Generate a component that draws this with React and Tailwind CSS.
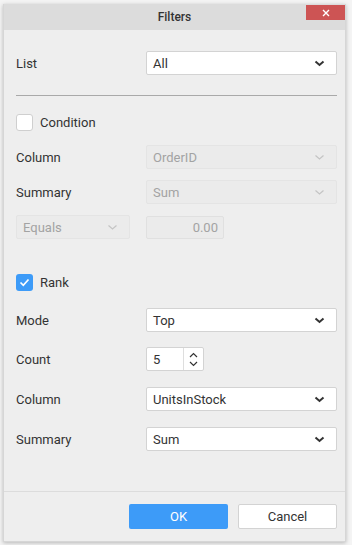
const font = { fontFamily: 'Roboto, "Liberation Sans", sans-serif' }

function Chevron({ disabled }) {
    return (
        <svg width="11" height="7" viewBox="0 0 11 7" className="shrink-0">
            <polyline
                points="1.5,1.5 5.5,5 9.5,1.5"
                fill="none"
                stroke={disabled ? '#c4c4c4' : '#333'}
                strokeWidth={disabled ? 1.2 : 2}
            />
        </svg>
    )
}

function Select({ value, disabled, className = '' }) {
    return (
        <div
            className={`h-[24px] flex items-center justify-between pl-[6px] pr-[11px] rounded-[2px] border text-[13px] leading-none ${
                disabled ? 'bg-[#ebebeb] border-[#e4e4e4] text-[#a3a3a3]' : 'bg-white border-[#d3d3d3] text-[#333]'
            } ${className}`}
        >
            <span>{value}</span>
            <Chevron disabled={disabled} />
        </div>
    )
}

function Row({ label, children, className = '' }) {
    return (
        <div className={`flex items-center ${className}`}>
            <div className="w-[130px] text-[13px] leading-none text-[#333]">{label}</div>
            <div className="flex-1">{children}</div>
        </div>
    )
}

function Checkbox({ checked, label, className = '' }) {
    return (
        <div className={`h-[17px] flex items-center gap-[7px] ${className}`}>
            {checked ? (
                <div className="w-[17px] h-[17px] rounded-[3px] bg-[#3d9bf8] flex items-center justify-center">
                    <svg width="11" height="9" viewBox="0 0 11 9">
                        <polyline points="1.5,4.5 4.3,7.3 9.5,1.5" fill="none" stroke="white" strokeWidth="1.7" />
                    </svg>
                </div>
            ) : (
                <div className="w-[17px] h-[17px] rounded-[3px] bg-white border border-[#cfcfcf]" />
            )}
            <span className="text-[13px] leading-none text-[#333]">{label}</span>
        </div>
    )
}

export default function App() {
    return (
        <div className="w-[352px] h-[545px] bg-[#f4f4f4] overflow-hidden" style={font}>
            <div className="relative ml-[3px] mt-[4px] w-[343px] h-[538px] flex flex-col bg-[#eeeeee] border-x border-b border-[#d6d6d6] shadow-[0_1px_4px_rgba(0,0,0,0.25)]">
                {/* Header */}
                <div className="h-[26px] bg-[#dcdcdc] flex items-center justify-center text-[12px] font-medium text-[#333]">
                    Filters
                </div>
                <div className="absolute right-[0px] top-[1px] w-[39px] h-[15px] bg-[#cd5454] flex items-center justify-center">
                    <svg width="8" height="8" viewBox="0 0 8 8">
                        <path d="M1 1 L7 7 M7 1 L1 7" stroke="white" strokeWidth="1.4" />
                    </svg>
                </div>

                {/* Body */}
                <div className="flex-1 flex flex-col pl-[12px] pr-[8px]">
                    <Row label="List" className="mt-[21px]">
                        <Select value="All" />
                    </Row>
                    <div className="mt-[20px] border-t border-[#a9a9a9]" />

                    <Checkbox label="Condition" className="mt-[18px]" />
                    <Row label="Column" className="mt-[14px]">
                        <Select value="OrderID" disabled className="h-[23px]" />
                    </Row>
                    <Row label="Summary" className="mt-[11px]">
                        <Select value="Sum" disabled className="h-[23px]" />
                    </Row>
                    <div className="mt-[11px] flex items-center">
                        <div className="w-[114px] mr-[16px]">
                            <Select value="Equals" disabled className="h-[23px]" />
                        </div>
                        <div className="w-[78px] h-[23px] rounded-[2px] border border-[#e0e0e0] bg-[#ebebeb] text-[13px] leading-none text-[#a3a3a3] flex items-center justify-end pr-[5px]">
                            0.00
                        </div>
                    </div>

                    <Checkbox checked label="Rank" className="mt-[35px]" />
                    <Row label="Mode" className="mt-[17px]">
                        <Select value="Top" />
                    </Row>
                    <Row label="Count" className="mt-[15px]">
                        <div className="w-[58px] h-[24px] flex bg-white border border-[#d3d3d3] rounded-[2px]">
                            <div className="flex-1 flex items-center pl-[6px] text-[13px] leading-none text-[#333] border-r border-[#dedede]">5</div>
                            <div className="w-[19px] flex flex-col items-center justify-center gap-[3px]">
                                <svg width="9" height="6" viewBox="0 0 9 6">
                                    <polyline points="1,5 4.5,1.5 8,5" fill="none" stroke="#333" strokeWidth="1.2" />
                                </svg>
                                <svg width="9" height="6" viewBox="0 0 9 6">
                                    <polyline points="1,1 4.5,4.5 8,1" fill="none" stroke="#333" strokeWidth="1.2" />
                                </svg>
                            </div>
                        </div>
                    </Row>
                    <Row label="Column" className="mt-[16px]">
                        <Select value="UnitsInStock" />
                    </Row>
                    <Row label="Summary" className="mt-[16px]">
                        <Select value="Sum" />
                    </Row>
                </div>

                {/* Footer */}
                <div className="h-[50px] border-t border-[#dcdcdc] flex justify-end gap-[10px] pt-[12px] pr-[8px]">
                    <button className="w-[99px] h-[25px] rounded-[2px] bg-[#3d9bf8] text-white text-[13px]">OK</button>
                    <button className="w-[99px] h-[25px] rounded-[2px] bg-white border border-[#d3d3d3] text-[#333] text-[13px]">
                        Cancel
                    </button>
                </div>
            </div>
        </div>
    )
}
